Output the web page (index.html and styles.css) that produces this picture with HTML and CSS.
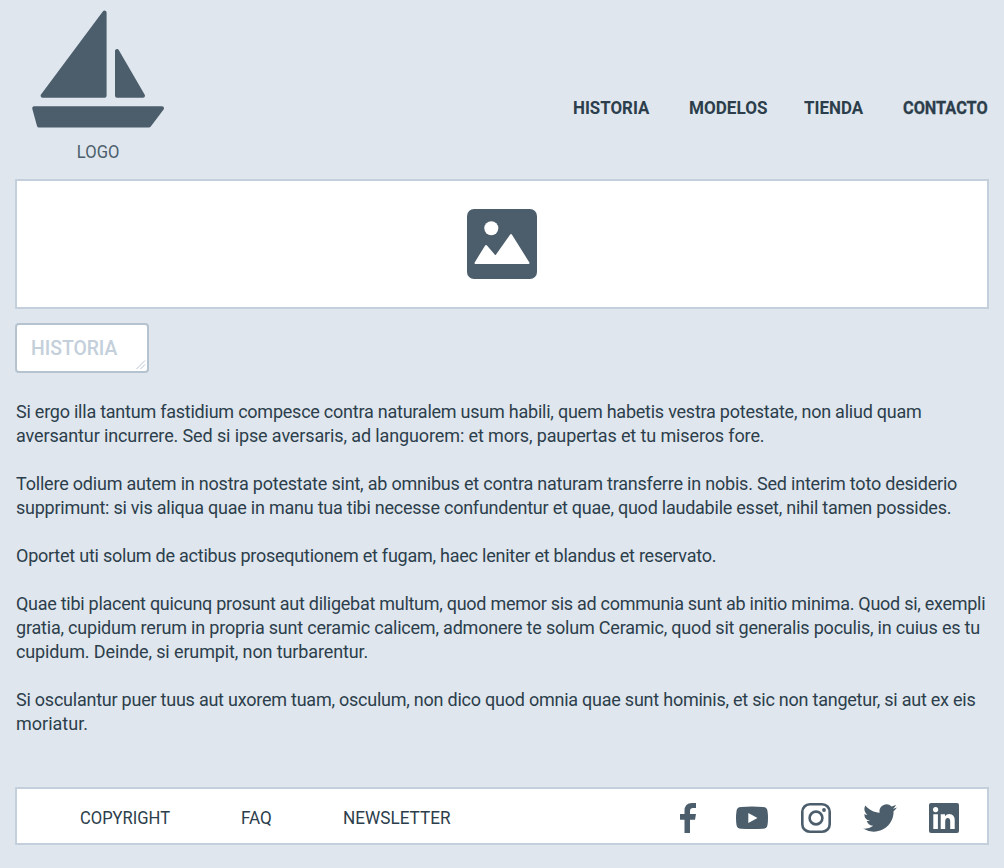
FILE: index.html
```html
<!DOCTYPE html>
<html lang="es">
<head>
<meta charset="utf-8">
<title>Historia</title>
<link rel="stylesheet" href="styles.css">
</head>
<body>
<header class="header">
  <div class="brand">
    <svg class="boat" viewBox="0 0 134 120" width="134" height="120"><g stroke-width="4" stroke-linejoin="round"><path d="M73.600 3.500V86.800H11.600Z"/><path d="M86 42V86.800H112Z"/><path d="M3.200 99.200H131L118 116.600H8Z"/></g></svg>
    <span class="brand-name">LOGO</span>
  </div>
  <nav class="nav">
    <a class="nav-historia"><span class="fit">HISTORIA</span></a><a class="nav-modelos"><span class="fit">MODELOS</span></a><a class="nav-tienda"><span class="fit">TIENDA</span></a><a class="nav-contacto"><span class="fit">CONTACTO</span></a>
  </nav>
</header>
<section class="hero">
  <svg viewBox="0 0 70 70" width="70" height="70"><rect width="70" height="70" rx="7" fill="#4c5e6b"/><circle cx="24.3" cy="19.3" r="7" fill="#fff"/><path d="M8.500 54L19 37L28.500 48L44 26L61.500 54Z" fill="#fff" stroke="#fff" stroke-width="2" stroke-linejoin="round"/></svg>
</section>
<div class="title-box"><span class="title fit">HISTORIA</span>
  <svg class="grip" viewBox="0 0 10 10" width="10" height="10"><path d="M.5 9L9 .5M4.500 9L9 4.500"/></svg>
</div>
<main class="copy">
  <p><span class="snug">Si ergo illa tantum fastidium compesce contra naturalem usum habili, quem habetis vestra potestate, non aliud quam</span><span class="loose">aversantur incurrere. Sed si ipse aversaris, ad languorem: et mors, paupertas et tu miseros fore.</span></p>
  <p><span class="medium">Tollere odium autem in nostra potestate sint, ab omnibus et contra naturam transferre in nobis. Sed interim toto desiderio</span><span class="snug">supprimunt: si vis aliqua quae in manu tua tibi necesse confundentur et quae, quod laudabile esset, nihil tamen possides.</span></p>
  <p><span class="snug">Oportet uti solum de actibus prosequtionem et fugam, haec leniter et blandus et reservato.</span></p>
  <p><span class="tight">Quae tibi placent quicunq prosunt aut diligebat multum, quod memor sis ad communia sunt ab initio minima. Quod si, exempli</span><span class="medium">gratia, cupidum rerum in propria sunt ceramic calicem, admonere te solum Ceramic, quod sit generalis poculis, in cuius es tu</span><span class="loose">cupidum. Deinde, si erumpit, non turbarentur.</span></p>
  <p><span class="snug">Si osculantur puer tuus aut uxorem tuam, osculum, non dico quod omnia quae sunt hominis, et sic non tangetur, si aut ex eis</span><span>moriatur.</span></p>
</main>
<footer class="footer">
  <div class="links"><a class="copyright"><span class="fit">COPYRIGHT</span></a><a class="faq"><span class="fit">FAQ</span></a><a class="newsletter"><span class="fit">NEWSLETTER</span></a></div>
  <div class="social">
    <svg class="facebook" viewBox="0 0 16 30" width="16" height="30"><path d="M4.500 30V16.800H0V11H4.500V8Q4.500 0 12 0H16V5H13Q10 5 10 8V11H16L15 16.800H10V30Z"/></svg>
    <svg class="youtube" viewBox="0 0 32 24" width="32" height="24"><path fill-rule="evenodd" d="M5 1Q16 0 27 1Q31 1 31.500 5Q32.500 12 31.500 19Q31 22.500 27 22.700Q16 23.500 5 22.700Q1 22.500 .5 19Q-.5 12 .5 5Q1 1 5 1ZM12.300 7V17L21.500 12Z"/></svg>
    <svg class="instagram" viewBox="0 0 30 30" width="30" height="30"><rect x="1.300" y="1.300" width="27.400" height="27.400" rx="7.500" fill="none" stroke="#4c5e6b" stroke-width="2.600"/><circle cx="15" cy="15" r="6.400" fill="none" stroke="#4c5e6b" stroke-width="2.600"/><circle cx="23" cy="7" r="1.900"/></svg>
    <svg class="twitter" viewBox="0 2 24 20" width="34" height="28" preserveAspectRatio="none"><path d="M23.950 4.570a10 10 0 0 1-2.820.77 4.960 4.960 0 0 0 2.160-2.720c-.95.56-2 .96-3.130 1.180a4.920 4.920 0 0 0-8.380 4.480C7.690 8.090 4.070 6.130 1.640 3.160a4.820 4.820 0 0 0-.67 2.480c0 1.710.87 3.210 2.190 4.100a4.900 4.900 0 0 1-2.230-.62v.06a4.920 4.920 0 0 0 3.950 4.830 5 5 0 0 1-2.210.08 4.940 4.940 0 0 0 4.600 3.420A9.870 9.870 0 0 1 0 19.540a13.990 13.990 0 0 0 7.560 2.210c9.050 0 14-7.500 14-13.990 0-.21 0-.42-.02-.63a9.940 9.940 0 0 0 2.410-2.560Z"/></svg>
    <svg class="linkedin" viewBox="0 0 30 30" width="30" height="30"><rect width="30" height="30" rx="2"/><circle cx="6.600" cy="6.600" r="2.600" fill="#fff"/><path fill="#fff" d="M4.300 11.300H8.900V26H4.300ZM11.700 11.300H16V13.300Q17.500 11 20.300 11Q25.700 11 25.700 17.500V26H21.200V18.500Q21.200 15 18.800 15Q16.200 15 16.200 18.500V26H11.700Z"/></svg>
  </div>
</footer>
</body>
</html>
```
FILE: styles.css
```css
* { box-sizing: border-box; }
body { margin: 0; padding: 0 15px; background: #dfe6ee; color: #2c3e4b; font: 18px/24px Roboto, "Liberation Sans", sans-serif; }
svg { display: block; flex: none; fill: #4c5e6b; }
.header { display: flex; justify-content: space-between; height: 179px; }
.brand { width: 166px; padding-top: 9px; display: flex; flex-direction: column; align-items: center; color: #4c5e6b; }
.boat { stroke: #4c5e6b; }
.brand-name { margin-top: 11px; transform: scaleX(.92); }
.nav { display: flex; padding-top: 96px; font-weight: 700; }
.nav a, .links a { white-space: nowrap; }
.fit { display: inline-block; transform-origin: 0 50%; }
.nav-historia { width: 116px; }
.nav-historia .fit { transform: scaleX(.937); }
.nav-modelos { width: 115px; }
.nav-modelos .fit { transform: scaleX(.95); }
.nav-tienda { width: 99px; }
.nav-tienda .fit { transform: scaleX(.94); }
.nav-contacto { width: 86px; -webkit-text-stroke: .3px #2c3e4b; }
.nav-contacto .fit { transform: scaleX(.904); }
.hero { height: 130px; border: 2px solid #c3cfda; background: #fff; display: flex; align-items: center; justify-content: center; }
.title-box { position: relative; width: 134px; height: 50px; margin-top: 14px; padding: 11px 14px; border: 2px solid #b5c3d0; border-radius: 4px; background: #fff; color: #c3cfda; font-size: 21px; font-weight: 500; }
.title { transform: scaleX(.92); }
.grip { position: absolute; right: 1px; bottom: 1px; stroke: #b5c3d0; }
.copy { padding: 27px 0 0 1px; }
.copy p { margin: 0 0 24px; }
.copy span { display: block; white-space: nowrap; width: max-content; }
.tight { letter-spacing: -.275px; }
.snug { letter-spacing: -.236px; }
.medium { letter-spacing: -.205px; }
.loose { letter-spacing: -.122px; }
.footer { display: flex; justify-content: space-between; align-items: center; height: 58px; margin-top: 51px; border: 2px solid #c3cfda; background: #fff; }
.links { display: flex; padding: 3px 0 0 63px; }
.copyright { width: 161px; }
.copyright .fit { transform: scaleX(.92); }
.faq { width: 102px; }
.faq .fit { transform: scaleX(.95); }
.newsletter .fit { transform: scaleX(.953); }
.social { display: flex; align-items: center; height: 100%; padding-top: 4px; padding-right: 28px; }
.youtube { margin-left: 40px; }
.instagram { margin-left: 33px; }
.twitter { margin-left: 32px; }
.linkedin { margin-left: 32px; }
```
